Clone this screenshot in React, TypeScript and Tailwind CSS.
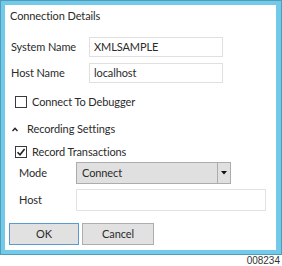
const font = { fontFamily: 'Lato, "Open Sans", sans-serif' };

function Check({ checked }: { checked?: boolean }) {
  return (
    <div className="w-[12px] h-[12px] border border-[#3a3a3a] bg-white flex items-center justify-center">
      {checked ? (
        <svg width="10" height="10" viewBox="0 0 10 10">
          <path d="M1.5 5.2 L4 7.8 L8.6 2" fill="none" stroke="#222" strokeWidth="1.6" />
        </svg>
      ) : null}
    </div>
  );
}

export default function App() {
  return (
    <div className="w-[282px] h-[266px] bg-white text-[#2b2b2b] text-[11px] tracking-[-0.1px]" style={font}>
      <div className="h-[255px] border border-[#4f9dbb]">
        <div className="h-full border-t-[4px] border-l-[4px] border-r-[5px] border-b-[4px] border-[#72c9e8] bg-white flex flex-col pl-[5px]">
          <div className="h-[20px] mt-[1px] flex items-center">Connection Details</div>

          <div className="mt-[11px] flex items-center h-[20px]">
            <div className="w-[79px] pl-[1px]">System Name</div>
            <div className="w-[134px] h-[20px] border border-[#e0e0e0] flex items-center pl-[4px]">XMLSAMPLE</div>
          </div>
          <div className="mt-[6px] flex items-center h-[20px]">
            <div className="w-[79px] pl-[1px]">Host Name</div>
            <div className="w-[134px] h-[20px] border border-[#e0e0e0] flex items-center pl-[4px]">localhost</div>
          </div>

          <div className="mt-[9px] h-[20px] flex items-center pl-[5px] gap-[5px]">
            <Check />
            <span>Connect To Debugger</span>
          </div>

          <div className="mt-[7px] h-[20px] flex items-center pl-[2px] gap-[9px]">
            <svg width="6" height="5" viewBox="0 0 6 5">
              <path d="M0.5 4 L3 1.3 L5.5 4" fill="none" stroke="#222" strokeWidth="1.5" />
            </svg>
            <span>Recording Settings</span>
          </div>

          <div className="mt-[4px] h-[18px] flex items-center pl-[5px] gap-[5px]">
            <Check checked />
            <span>Record Transactions</span>
          </div>

          <div className="mt-[1px] flex items-center h-[22px]">
            <div className="w-[66px] pl-[9px]">Mode</div>
            <div className="w-[155px] h-[22px] border border-[#acacac] bg-[#e0e0e0] flex">
              <div className="flex-1 flex items-center pl-[5px]">Connect</div>
              <div className="w-[13px] border-l border-[#acacac] flex items-center justify-center">
                <svg width="6" height="4" viewBox="0 0 6 4">
                  <path d="M0 0 H6 L3 3.5 Z" fill="#111" />
                </svg>
              </div>
            </div>
          </div>

          <div className="mt-[5px] flex items-center h-[22px]">
            <div className="w-[66px] pl-[9px]">Host</div>
            <div className="w-[190px] h-[22px] border border-[#e2e2e2]" />
          </div>

          <div className="mt-[12px] flex gap-[3px]">
            <div className="w-[70px] h-[22px] border border-[#5b9bd5] bg-[#e1e1e1] flex items-center justify-center -ml-[1px]">OK</div>
            <div className="w-[72px] h-[22px] border border-[#adadad] bg-[#e1e1e1] flex items-center justify-center">Cancel</div>
          </div>
        </div>
      </div>
      <div className="flex justify-end pr-[2px] text-[10px] leading-[10px] mt-[1px] text-[#333] tracking-normal" style={{ fontFamily: '"Liberation Sans", sans-serif' }}>
        008234
      </div>
    </div>
  );
}
